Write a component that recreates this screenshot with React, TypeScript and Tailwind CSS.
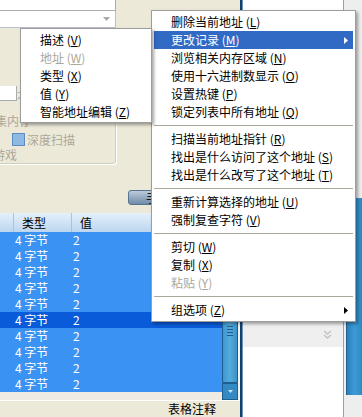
import React from "react";

type Item =
  | { label: string; k: string; disabled?: boolean; active?: boolean; sub?: boolean }
  | "sep";

const mainItems: Item[] = [
  { label: "删除当前地址", k: "L" },
  { label: "更改记录", k: "M", active: true, sub: true },
  { label: "浏览相关内存区域", k: "N" },
  { label: "使用十六进制数显示", k: "O" },
  { label: "设置热键", k: "P" },
  { label: "锁定列表中所有地址", k: "Q" },
  "sep",
  { label: "扫描当前地址指针", k: "R" },
  { label: "找出是什么访问了这个地址", k: "S" },
  { label: "找出是什么改写了这个地址", k: "T" },
  "sep",
  { label: "重新计算选择的地址", k: "U" },
  { label: "强制复查字符", k: "V" },
  "sep",
  { label: "剪切", k: "W" },
  { label: "复制", k: "X" },
  { label: "粘贴", k: "Y", disabled: true },
  "sep",
  { label: "组选项", k: "Z", sub: true },
];

const subItems: Item[] = [
  { label: "描述", k: "V" },
  { label: "地址", k: "W", disabled: true },
  { label: "类型", k: "X" },
  { label: "值", k: "Y" },
  { label: "智能地址编辑", k: "Z" },
];

function Arrow({ white }: { white?: boolean }) {
  return (
    <svg width="4" height="7" viewBox="0 0 4 7" className="shrink-0">
      <polygon points="0,0 4,3.5 0,7" fill={white ? "#ffffff" : "#000000"} />
    </svg>
  );
}

function MenuRow({ it }: { it: Item }) {
  if (it === "sep") {
    return (
      <div className="h-[9px] flex items-center">
        <div className="h-[1px] w-full bg-[#ACA899]" />
      </div>
    );
  }
  return (
    <div
      className={`h-[18px] flex items-center pl-[17px] pr-[5px] ${
        it.active ? "bg-[#316AC5] text-white" : it.disabled ? "text-[#ACA899]" : "text-black"
      }`}
    >
      <span className="flex-1 whitespace-nowrap leading-[18px]">
        {it.label} (<span className="underline">{it.k}</span>)
      </span>
      {it.sub && <Arrow white={it.active} />}
    </div>
  );
}

const rows = Array.from({ length: 10 }, (_, i) => i);

export default function App() {
  return (
    <div className="relative w-[362px] h-[417px] overflow-hidden bg-[#ECE9D8] text-[12px] font-['Noto_Sans_CJK_SC','Noto_Sans',sans-serif] flex">
      {/* Left pane */}
      <div className="w-[240px] h-full flex flex-col shrink-0">
        <div className="h-[213px] flex flex-col overflow-hidden shrink-0">
          <div className="w-[116px] h-[11px] bg-white border-b border-r border-[#A5ACB2] shrink-0" />
          <div className="w-[116px] h-[17px] bg-white border-b border-r border-[#B9C1C8] flex items-center justify-end pr-[5px] shrink-0">
            <svg width="7" height="4" viewBox="0 0 7 4">
              <polygon points="0,0 7,0 3.5,4" fill="#A8A8A8" />
            </svg>
          </div>
          <div className="mt-[58px] h-[15px] flex items-end shrink-0">
            <div className="w-[17px] h-[15px] bg-white border-b border-r border-[#A5ACB2]" />
            <span className="text-[#ACA899] leading-[12px]">术</span>
          </div>
          {/* group box */}
          <div className="mt-[20px] ml-[-4px] w-[120px] h-[43px] border border-[#D0D0BF] rounded-[3px] shadow-[1px_1px_0_#ffffff] flex flex-col shrink-0">
            <div className="-mt-[7px] ml-[-14px] h-[12px] leading-[12px] text-[#ACA899] bg-[#ECE9D8] self-start whitespace-nowrap">
              采集内存
            </div>
            <div className="mt-[6px] h-[13px] flex items-center ml-[15px]">
              <div className="w-[13px] h-[13px] bg-[#8DB9E3] border border-[#5A8CC2]" />
              <span className="ml-[2px] text-[#ACA899] leading-[13px]">深度扫描</span>
            </div>
            <div className="mt-[3px] ml-[-28px] h-[12px] leading-[12px] text-[#ACA899] whitespace-nowrap">
              暂停游戏
            </div>
          </div>
          <div className="mt-[26px] ml-[128px] h-[15px] w-[40px] rounded-[3px] border border-[#56748F] bg-gradient-to-b from-[#BCCBDA] to-[#6F8CA8] pl-[17px] leading-[13px] text-[#1a1a1a] whitespace-nowrap overflow-hidden shrink-0">
            手
          </div>
        </div>

        {/* table + scrollbar */}
        <div className="h-[187px] flex shrink-0">
          <div className="w-[222px] flex flex-col">
            <div className="h-[19px] flex bg-gradient-to-b from-[#E4F0FB] to-[#BDD6EF] text-black">
              <div className="w-[14px] border-r border-[#A6C3E1]" />
              <div className="w-[58px] border-r border-[#A6C3E1] pl-[8px] leading-[19px]">类型</div>
              <div className="flex-1 pl-[8px] leading-[19px]">值</div>
            </div>
            {rows.map((i) => (
              <div
                key={i}
                className={`h-[16px] flex text-white ${i === 5 ? "bg-[#0A5BD9]" : "bg-[#3A92F3]"}`}
              >
                <div className="w-[14px]" />
                <div className="w-[58px] pl-[1px] leading-[16px] whitespace-nowrap">4 字节</div>
                <div className="flex-1 pl-[1px] leading-[16px]">2</div>
              </div>
            ))}
            <div className="h-[8px] bg-[#EEECE2]" />
          </div>
          {/* scrollbar */}
          <div className="w-[16px] flex flex-col bg-[#2F7FB5]">
            <div className="h-[17px] bg-[#3288C0] border border-[#1E5E8E]" />
            <div className="flex-1 rounded-[2px] border border-[#1E5E8E] bg-gradient-to-r from-[#3E98CF] via-[#56AADB] to-[#3A92C9] flex flex-col items-center">
              <div className="flex flex-col gap-[2px] mt-[95px]">
                <div className="w-[6px] h-[1px] bg-[#1D5B8C]" />
                <div className="w-[6px] h-[1px] bg-[#1D5B8C]" />
                <div className="w-[6px] h-[1px] bg-[#1D5B8C]" />
                <div className="w-[6px] h-[1px] bg-[#1D5B8C]" />
              </div>
            </div>
            <div className="h-[17px] bg-[#3389C2] border border-[#1E5E8E] flex items-center justify-center">
              <svg width="5" height="3" viewBox="0 0 5 3">
                <polygon points="0,0 5,0 2.5,3" fill="#CFE4F2" />
              </svg>
            </div>
          </div>
          <div className="w-[2px] bg-[#F4F3EC]" />
        </div>

        {/* bottom bar */}
        <div className="h-[17px] border-t border-white bg-[#ECE9D8] pl-[168px] leading-[16px] text-black whitespace-nowrap shrink-0">
          表格注释
        </div>
      </div>

      {/* divider */}
      <div className="w-[2px] h-full bg-[#173F66] shrink-0" />
      <div className="w-[1px] h-full bg-[#6C94BD] shrink-0" />

      {/* right panel */}
      <div className="w-[101px] h-full bg-white border-r border-[#A0A0A0] flex flex-col shrink-0">
        <div className="h-[322px] shrink-0" />
        <div className="h-[25px] bg-[#EFEFEF] flex items-center justify-end pr-[11px] shrink-0">
          <svg width="9" height="9" viewBox="0 0 9 9">
            <polyline points="1,1 4.5,4 8,1" fill="none" stroke="#C4C4C4" strokeWidth="1.6" />
            <polyline points="1,5 4.5,8 8,5" fill="none" stroke="#C4C4C4" strokeWidth="1.6" />
          </svg>
        </div>
        <div className="flex-1" />
      </div>

      {/* far right */}
      <div className="flex-1 h-full bg-[#EEEEEE] flex flex-col">
        <div className="h-[198px] shrink-0" />
        <div className="h-[197px] ml-[2px] border-l border-[#1D5F93] bg-gradient-to-r from-[#2C7FBA] via-[#3E9BD6] to-[#2F88C3] shrink-0" />
      </div>

      {/* main context menu */}
      <div className="absolute left-[151px] top-[10px] w-[205px] border border-[#9D9D9D] bg-white px-[2px] pt-[2px] pb-[2px] shadow-[2px_2px_3px_rgba(0,0,0,0.35)]">
        {mainItems.map((it, i) => (
          <MenuRow key={i} it={it} />
        ))}
      </div>

      {/* submenu */}
      <div className="absolute left-[20px] top-[28px] w-[132px] border border-[#9D9D9D] bg-white px-[2px] pt-[2px] pb-[1px] shadow-[2px_2px_3px_rgba(0,0,0,0.35)]">
        {subItems.map((it, i) => (
          <MenuRow key={i} it={it} />
        ))}
      </div>
    </div>
  );
}
